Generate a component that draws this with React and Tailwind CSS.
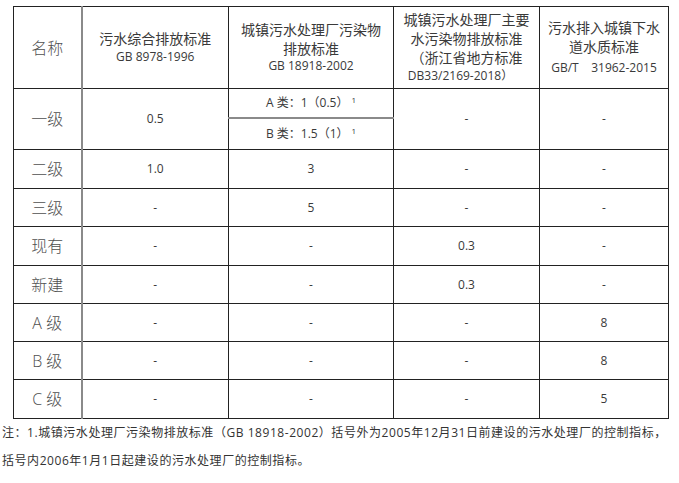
const rows = [
  { name: '二级', c2: '1.0', c3: '3', c4: '-', c5: '-', h: 'h-[39px]' },
  { name: '三级', c2: '-', c3: '5', c4: '-', c5: '-', h: 'h-[38px]' },
  { name: '现有', c2: '-', c3: '-', c4: '0.3', c5: '-', h: 'h-[39px]' },
  { name: '新建', c2: '-', c3: '-', c4: '0.3', c5: '-', h: 'h-[38px]' },
  { name: 'A 级', c2: '-', c3: '-', c4: '-', c5: '8', h: 'h-[38px]' },
  { name: 'B 级', c2: '-', c3: '-', c4: '-', c5: '8', h: 'h-[38px]' },
  { name: 'C 级', c2: '-', c3: '-', c4: '-', c5: '5', h: 'h-[39px]' },
];

const cell = 'border border-[#222] text-center align-middle p-0';
const nameCell = 'border border-[#222] border-r-2 border-r-[#8a8a8a] text-center align-middle p-0 text-[16px] font-light text-[#505050]';
const line = 'h-[19px] flex items-center justify-center';
const cjk = line + ' text-[14px]';

function Head({ lines }) {
  return (
    <div className="flex flex-col items-stretch">
      {lines.map((l, i) => (
        <div key={i} className={l.latin ? line + ' whitespace-pre ' + (l.cls || '') : cjk}>{l.t}</div>
      ))}
    </div>
  );
}

export default function App() {
  return (
    <div className="w-[679px] h-[483px] bg-white text-[#3a3a3a] overflow-hidden" style={{ fontFamily: '"Open Sans", "Noto Sans CJK SC", sans-serif' }}>
      <div className="pt-[6px] pl-[13px]">
        <table className="border-collapse table-fixed w-[655px] text-[12px]">
          <colgroup>
            <col className="w-[68px]" />
            <col className="w-[147px]" />
            <col className="w-[165px]" />
            <col className="w-[146px]" />
            <col className="w-[129px]" />
          </colgroup>
          <tbody>
            <tr className="h-[82px]">
              <td className={nameCell}>名称</td>
              <td className={cell}>
                <Head lines={[{ t: '污水综合排放标准' }, { t: 'GB 8978-1996', latin: true }]} />
              </td>
              <td className={cell}>
                <Head lines={[{ t: '城镇污水处理厂污染物' }, { t: '排放标准' }, { t: 'GB 18918-2002', latin: true, cls: '-mt-[2px]' }]} />
              </td>
              <td className={cell}>
                <Head lines={[{ t: '城镇污水处理厂主要' }, { t: '水污染物排放标准' }, { t: '（浙江省地方标准' }, { t: 'DB33/2169-2018）', latin: true, cls: '-ml-[12px]' }]} />
              </td>
              <td className={cell}>
                <Head lines={[{ t: '污水排入城镇下水' }, { t: '道水质标准' }, { t: 'GB/T    31962-2015', latin: true, cls: 'mt-[2px]' }]} />
              </td>
            </tr>
            <tr className="h-[29px]">
              <td rowSpan={2} className={nameCell}>一级</td>
              <td rowSpan={2} className={cell}>0.5</td>
              <td className="border border-[#222] border-b-2 border-b-[#8a8a8a] text-center align-middle p-0">
                A 类：1（0.5）<sup className="text-[8px] ml-[3px]">1</sup>
              </td>
              <td rowSpan={2} className={cell}>-</td>
              <td rowSpan={2} className={cell}>-</td>
            </tr>
            <tr className="h-[32px]">
              <td className={cell}>
                B 类：1.5（1）<sup className="text-[8px] ml-[3px]">1</sup>
              </td>
            </tr>
            {rows.map(r => (
              <tr key={r.name} className={r.h}>
                <td className={nameCell}>{r.name}</td>
                <td className={cell}>{r.c2}</td>
                <td className={cell}>{r.c3}</td>
                <td className={cell}>{r.c4}</td>
                <td className={cell}>{r.c5}</td>
              </tr>
            ))}
          </tbody>
        </table>
      </div>
      <div className="pl-[2px] text-[12px] leading-[28px] text-[#333] whitespace-nowrap tracking-[0.55px]">
        <div>注：1.城镇污水处理厂污染物排放标准（GB 18918-2002）括号外为2005年12月31日前建设的污水处理厂的控制指标，</div>
        <div>括号内2006年1月1日起建设的污水处理厂的控制指标。</div>
      </div>
    </div>
  );
}
